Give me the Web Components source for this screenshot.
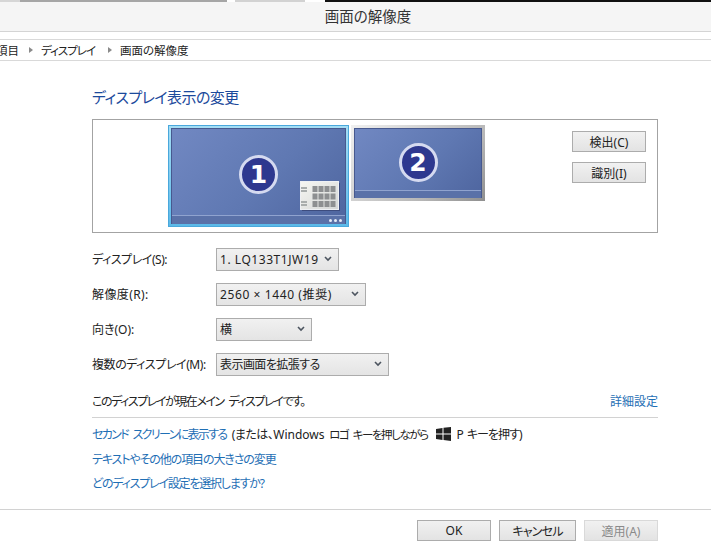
<!DOCTYPE html>
<html lang="ja">
<head>
<meta charset="utf-8">
<title>画面の解像度</title>
<style>
  html, body { margin: 0; height: 100%; background: #fff; overflow: hidden; }
  body {
    font: 12px "Noto Sans", "Noto Sans CJK JP", sans-serif;
    font-feature-settings: "palt";
    color: #1e1e1e;
  }
</style>
</head>
<body>
<screen-resolution></screen-resolution>

<script>
const FONT = `"Noto Sans", "Noto Sans CJK JP", sans-serif`

customElements.define('title-bar', class extends HTMLElement {
  constructor () {
    super()
    this.attachShadow({ mode: 'open' }).innerHTML = `
      <style>
        :host { display: block; }
        .strip { display: flex; height: 2px; background: #fff; }
        .strip i { display: block; height: 2px; }
        .bar {
          box-sizing: border-box; height: 30px; background: #f5f5f5; border-bottom: 1px solid #d4d4d4;
          display: flex; align-items: center; justify-content: center;
          padding: 0 0 2px 25px; font-size: 14.5px; color: #333;
        }
      </style>
      <div class="strip">
        <i style="width:20px;background:#d6d6d6"></i><i style="width:207px;background:#a6a6a6"></i>
        <i style="width:8px"></i><i style="width:70px;background:#d2d2d2"></i>
        <i style="width:20px"></i><i style="width:386px;background:#111"></i>
      </div>
      <div class="bar"><slot></slot></div>`
  }
})

customElements.define('crumb-bar', class extends HTMLElement {
  constructor () {
    super()
    this.attachShadow({ mode: 'open' }).innerHTML = `
      <style>
        :host {
          display: flex; align-items: center; height: 19px; margin-top: 7px; padding-bottom: 1px;
          border-top: 1px solid #d9d9d9; border-bottom: 1px solid #d9d9d9;
          overflow: hidden; font-size: 11.5px; color: #222; white-space: nowrap;
        }
        .clip { width: 19px; overflow: hidden; direction: rtl; }
        .arrow {
          width: 0; height: 0; margin: 0 7px 0 10px;
          border-left: 4px solid #8a8a8a;
          border-top: 3.5px solid transparent; border-bottom: 3.5px solid transparent;
        }
        .kana { letter-spacing: -1px; margin: 0 3px 0 1px; }
        .last { margin-left: 1px; }
      </style>
      <span class="clip">項目</span><span class="arrow"></span>
      <span class="kana">ディスプレイ</span><span class="arrow"></span>
      <span class="last">画面の解像度</span>`
  }
})

customElements.define('monitor-tile', class extends HTMLElement {
  constructor () {
    super()
    const main = this.hasAttribute('main')
    const rows = [5, 12.5, 20]
    const cols = [12.5, 18.5, 24.5, 30.5]
    const cells = rows.map(y => cols.map(x => `<rect x="${x}" y="${y}" width="5" height="6"/>`).join('')).join('')
    this.attachShadow({ mode: 'open' }).innerHTML = `
      <style>
        :host {
          display: block; box-sizing: border-box; position: relative;
          width: ${main ? 181 : 134}px; height: ${main ? 102 : 76}px;
          padding: 3px;
          background: ${main ? 'linear-gradient(#a5def5, #5bb9e8)' : 'linear-gradient(135deg, #f0f0f0, #b5b5b5 70%, #8f8f8f)'};
          ${main ? 'box-shadow: inset 0 0 0 1px #4aa8dc;' : ''}
        }
        .screen {
          height: 100%; box-sizing: border-box; display: flex; flex-direction: column;
          background: linear-gradient(135deg, #7188c2, #5f78b2 55%, #4e659f);
          border: 1px solid #47598f; border-bottom: 0;
        }
        .desk { flex: 1; display: flex; align-items: center; justify-content: center; padding-top: ${main ? 5 : 6}px; }
        .badge {
          box-sizing: border-box; width: 39px; height: 39px; border-radius: 50%;
          background: #2e388f; border: 3.5px solid #d5daf0;
          display: flex; align-items: center; justify-content: center;
          color: #fff; font: bold 25px "DejaVu Sans", sans-serif; line-height: 1;
        }
        .task {
          height: ${main ? 8 : 7}px; background: #5a71a8; border-top: 1px solid #90a3cf;
          display: flex; align-items: center; justify-content: flex-end; gap: 2px; padding-right: 3px;
        }
        .task i { width: 3px; height: 3px; border-radius: 50%; background: #e6ecf8; }
        svg { position: absolute; left: 132px; top: 56px; }
      </style>
      <div class="screen">
        <div class="desk"><div class="badge"><slot></slot></div></div>
        <div class="task">${main ? '<i></i><i></i><i></i>' : ''}</div>
      </div>
      ${main ? `<svg width="40" height="30" viewBox="0 0 40 30">
        <defs><linearGradient id="g" x1="0" y1="0" x2="1" y2="1"><stop offset="0" stop-color="#f6f6f2"/><stop offset="1" stop-color="#d4d6d6"/></linearGradient></defs>
        <rect x=".5" y=".5" width="38" height="28" fill="url(#g)" stroke="#eef0f4"/>
        <path d="M2 29.500h38M39.500 2v28" stroke="#3d4c7e" stroke-width="1"/>
        <g fill="#a9adad"><rect x="1" y="6" width="6" height="2"/><rect x="1" y="9" width="6" height="2"/><rect x="1" y="20" width="6" height="2"/><rect x="1" y="23" width="6" height="2"/></g>
        <g fill="#8d8f91">${cells}</g>
      </svg>` : ''}`
  }
})

customElements.define('win-button', class extends HTMLElement {
  constructor () {
    super()
    const off = this.hasAttribute('disabled')
    this.attachShadow({ mode: 'open' }).innerHTML = `
      <style>
        :host {
          display: flex; box-sizing: border-box; align-items: center; justify-content: center;
          width: var(--w, 74px); height: 21px; font-size: 12px;
          background: linear-gradient(#f1f1f1, #e3e3e3);
          border: 1px solid ${off ? '#d9d9d9' : '#acacac'};
          color: ${off ? '#8a8a8a' : '#222'};
        }
      </style><slot></slot>`
  }
})

customElements.define('win-select', class extends HTMLElement {
  constructor () {
    super()
    this.attachShadow({ mode: 'open' }).innerHTML = `
      <style>
        :host {
          display: flex; box-sizing: border-box; align-items: center; justify-content: space-between;
          height: 23px; padding: 0 6px 1px 3px; font-size: 12px; color: #222;
          background: linear-gradient(#f1f1f1, #e4e4e4);
          border: 1px solid #acacac; white-space: nowrap;
        }
        svg { display: block; flex: none; }
      </style>
      <slot></slot>
      <svg width="8" height="6" viewBox="0 0 8 6"><path d="M1 1l3 3 3-3" fill="none" stroke="#4d5560" stroke-width="1.6"/></svg>`
  }
})

customElements.define('form-row', class extends HTMLElement {
  constructor () {
    super()
    this.attachShadow({ mode: 'open' }).innerHTML = `
      <style>
        :host { display: grid; grid-template-columns: 124px auto; justify-content: start; align-items: center; font-size: 12px; }
        span { letter-spacing: var(--ls, 0); padding-bottom: 1px; }
      </style>
      <span>${this.getAttribute('label')}</span><slot></slot>`
  }
})

customElements.define('win-link', class extends HTMLElement {
  constructor () {
    super()
    this.attachShadow({ mode: 'open' }).innerHTML = `
      <style>:host { color: #1f6fb5; }</style><slot></slot>`
  }
})

customElements.define('screen-resolution', class extends HTMLElement {
  constructor () {
    super()
    this.attachShadow({ mode: 'open' }).innerHTML = `
      <style>
        :host {
          display: flex; flex-direction: column; width: 711px; height: 556px;
          font-family: ${FONT}; font-size: 12px; color: #222;
        }
        main { flex: 1; padding: 0 53px 0 92px; }
        h1 { margin: 0; height: 58px; padding-top: 25px; box-sizing: border-box; font-size: 15px; line-height: 22px; font-weight: 400; color: #1c4a9c; letter-spacing: -.55px; }
        .preview {
          box-sizing: border-box; height: 114px; border: 1px solid #a3a3a3;
          display: flex; align-items: flex-start; padding: 5px 11px 0 75px;
        }
        .monitors { display: flex; gap: 2px; flex: 1; }
        .side { display: flex; flex-direction: column; gap: 10px; padding-top: 6px; }
        .form { display: flex; flex-direction: column; gap: 12px; margin-top: 15px; }
        .status { display: flex; justify-content: space-between; align-items: center; height: 26px; margin-top: 12px; }
        .status span { letter-spacing: -1.45px; word-spacing: 3px; }
        hr { margin: 3px 0 0; border: 0; border-top: 1px solid #d2d2d2; }
        .links { display: flex; flex-direction: column; gap: 7px; padding-top: 8px; line-height: 17.5px; }
        .links div { white-space: nowrap; }
        .links .k1 { letter-spacing: -1.65px; word-spacing: 3px; }
        .k2 { letter-spacing: -.5px; margin-left: 2px; }
        .k3 { font-size: 11.5px; letter-spacing: -1.45px; word-spacing: 3px; }
        .k4 { letter-spacing: -1px; }
        .links .k5 { letter-spacing: -1.1px; }
        .links .k6 { letter-spacing: -1.2px; }
        .win { display: inline-block; vertical-align: -2px; margin: 0 6px 0 8px; }
        footer {
          box-sizing: border-box; height: 47px;
          border-top: 1px solid #d2d2d2; display: flex; justify-content: flex-end; gap: 8px;
          padding: 10px 53px 0 0;
        }
        .cancel { letter-spacing: -.8px; }
      </style>
      <title-bar>画面の解像度</title-bar>
      <crumb-bar></crumb-bar>
      <main>
        <h1>ディスプレイ表示の変更</h1>
        <section class="preview">
          <div class="monitors">
            <monitor-tile main>1</monitor-tile>
            <monitor-tile>2</monitor-tile>
          </div>
          <div class="side">
            <win-button>検出(C)</win-button>
            <win-button>識別(I)</win-button>
          </div>
        </section>
        <div class="form">
          <form-row label="ディスプレイ(S):" style="--ls:-.45px"><win-select style="width:123px;letter-spacing:.55px">1. LQ133T1JW19</win-select></form-row>
          <form-row label="解像度(R):" style="--ls:.4px"><win-select style="width:150px;letter-spacing:.6px">2560 × 1440 (推奨)</win-select></form-row>
          <form-row label="向き(O):"><win-select style="width:96px">横</win-select></form-row>
          <form-row label="複数のディスプレイ(M):" style="--ls:-.45px"><win-select style="width:173px;letter-spacing:-.55px">表示画面を拡張する</win-select></form-row>
        </div>
        <div class="status"><span>このディスプレイが現在メイン ディスプレイです。</span><win-link>詳細設定</win-link></div>
        <hr>
        <div class="links">
          <div><win-link class="k1">セカンド スクリーンに表示する</win-link> <span class="k2">(または、</span>Windows<span class="k3"> ロゴ キーを押しながら</span><svg class="win" width="15" height="14" viewBox="0 0 15 14"><path fill="#222" d="M0 2l6.500-1v5.500H0zM7.500.8L15 0v6.500H7.500zM0 7.500h6.500V13L0 12zM7.500 7.500H15V14l-7.500-1z"/></svg>P <span class="k4">キーを押す)</span></div>
          <div><win-link class="k5">テキストやその他の項目の大きさの変更</win-link></div>
          <div><win-link class="k6">どのディスプレイ設定を選択しますか?</win-link></div>
        </div>
      </main>
      <footer>
        <win-button>OK</win-button>
        <win-button class="cancel" style="--w:77px">キャンセル</win-button>
        <win-button disabled>適用(A)</win-button>
      </footer>`
  }
})
</script>
</body>
</html>
